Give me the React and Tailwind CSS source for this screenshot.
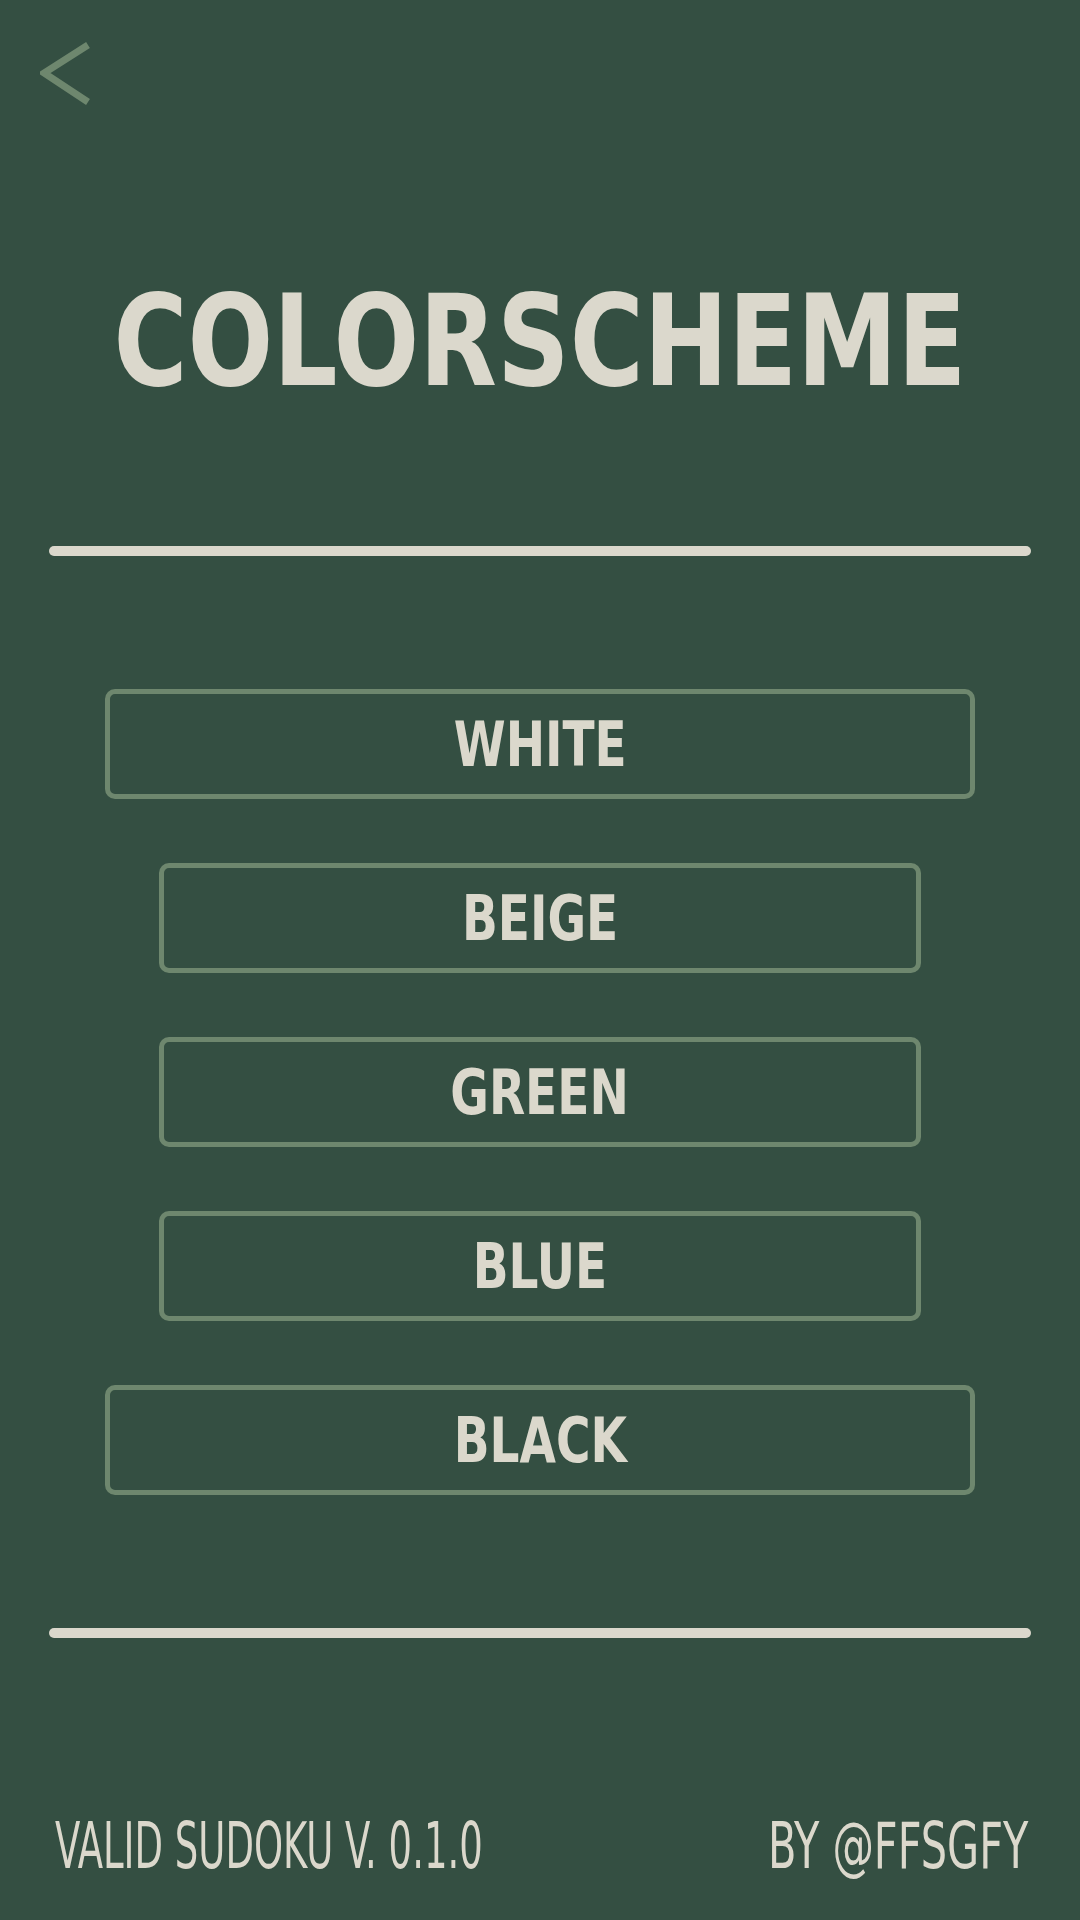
import React from "react";

const schemes = [
  { name: "WHITE", wide: true },
  { name: "BEIGE", wide: false },
  { name: "GREEN", wide: false },
  { name: "BLUE", wide: false },
  { name: "BLACK", wide: true },
];

const font = { fontFamily: '"Liberation Sans Narrow", "DejaVu Sans Condensed", "Liberation Sans", sans-serif' };

export default function App() {
  return (
    <div
      className="w-[1080px] h-[1920px] bg-[#344f42] text-[#dbd8cc] flex flex-col overflow-hidden"
      style={font}
    >
      {/* Back */}
      <button className="ml-[40px] mt-[42px] w-[52px] h-[64px] self-start">
        <svg width="52" height="64" viewBox="0 0 52 64" fill="none">
          <polyline points="48,3 4,31 48,60" stroke="#6e876e" strokeWidth="7" />
        </svg>
      </button>

      {/* Title */}
      <h1 className="mt-[173px] text-center text-[126px] leading-none font-bold scale-x-[0.89]">
        COLORSCHEME
      </h1>

      <div className="mt-[141px] mx-[49px] h-[10px] rounded-full bg-[#dbd8cc]" />

      {/* Options */}
      <div className="mt-[133px] flex flex-col items-center gap-[64px]">
        {schemes.map((s) => (
          <button
            key={s.name}
            className={`${s.wide ? "w-[870px]" : "w-[762px]"} h-[110px] border-[5px] border-[#6e876e] rounded-[10px] flex items-center justify-center text-[63px] leading-none font-bold`}
          >
            <span className="scale-x-[0.83]">{s.name}</span>
          </button>
        ))}
      </div>

      <div className="mt-[133px] mx-[49px] h-[10px] rounded-full bg-[#dbd8cc]" />

      {/* Footer */}
      <div className="mt-[176px] px-[55px] flex justify-between text-[64px] leading-none whitespace-nowrap">
        <span className="w-[427px] shrink-0 origin-left scale-x-[0.643]">VALID SUDOKU V. 0.1.0</span>
        <span className="w-[257px] shrink-0 origin-left scale-x-[0.72]">BY @FFSGFY</span>
      </div>
    </div>
  );
}
